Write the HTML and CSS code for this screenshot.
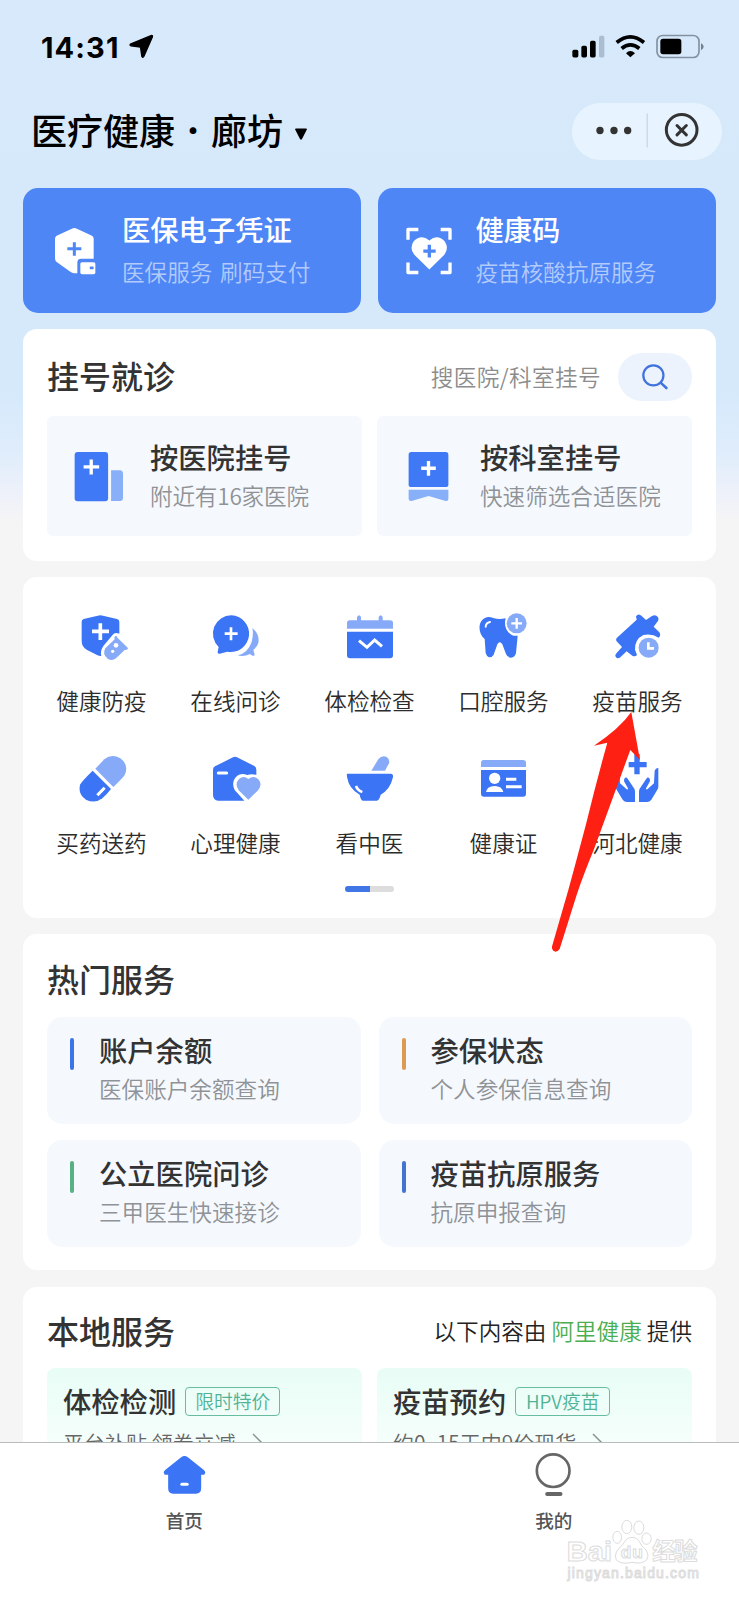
FILE: index.html
```html
<!DOCTYPE html>
<html lang="zh-CN">
<head>
<meta charset="utf-8">
<title>医疗健康</title>
<link rel="stylesheet" href="styles.css">
</head>
<body>
<div class="screen">
  <header class="status">
    <div class="status-left">
      <span class="clock">14:31</span>
      <svg class="locate" viewBox="386 103 76 76"><path d="M453 108Q459 106 457 112L431 171Q427 177 425 171L421 143L392 139Q386 137 392 133Z" fill="#000" stroke="#000" stroke-width="4" stroke-linejoin="round"/></svg>
    </div>
    <svg class="status-icons" viewBox="605 100 402 80">
      <rect x="609" y="150" width="18" height="23" rx="5"/><rect x="636" y="138" width="17" height="35" rx="5"/><rect x="662" y="123" width="17" height="50" rx="5"/><rect x="689" y="108" width="16" height="65" rx="5" fill="#aabdd1"/>
      <path d="M742 128Q783 94 824 128M757 146Q783 124 810 146" fill="none" stroke="#000" stroke-width="11"/>
      <path d="M783 172L770 160Q783 147 797 160Z"/>
      <rect x="863" y="107" width="126" height="66" rx="17" fill="none" stroke="#8392a1" stroke-width="5"/><rect x="873" y="117" width="63" height="46" rx="8"/><path d="M995 130Q1003 134 1003 140T995 151Z" fill="#73818f"/>
    </svg>
  </header>
  <div class="navbar">
    <h1 class="title"><span>医疗健康</span><span class="dot">·</span><span>廊坊</span></h1>
    <svg class="caret" viewBox="0 0 12 12"><path d="M1 0.5H11Q12.5 0.7 11.6 2L7 11Q6 12.4 5 11L.4 2Q-.5 .7 1 .5Z"/></svg>
    <div class="capsule">
      <svg viewBox="607 307 450 170"><g fill="#333"><circle cx="691" cy="392" r="11"/><circle cx="733" cy="392" r="11"/><circle cx="774" cy="392" r="11"/></g><path d="M832.5 341V443" stroke="#c3cedb" stroke-width="3"/><circle cx="936" cy="390" r="46" fill="none" stroke="#333" stroke-width="9"/><path d="M922 377L950 405M950 377L922 405" stroke="#333" stroke-width="9" stroke-linecap="round"/></svg>
    </div>
  </div>

  <main class="content">
    <section class="heroes">
      <div class="hero">
        <svg class="hero-icon" viewBox="150 165 150 155"><path d="M217 175Q223 172 229 175L276 197Q281 200 281 206V266H243Q232 266 232 278V309H222Q216 309 211 305L171 276Q165 272 165 265V206Q165 200 170 197Z" fill="#fff"/><path d="M223 216V257M202 236H244" stroke="#4f86f6" stroke-width="9"/><rect x="241" y="276" width="45" height="36" rx="5" fill="#fff"/><rect x="269" y="289" width="12" height="8" rx="3" fill="#4f86f6"/></svg>
        <div class="hero-text"><b>医保电子凭证</b><span class="spaced">医保服务 刷码支付</span></div>
      </div>
      <div class="hero hero-code">
        <svg class="hero-icon" viewBox="100 165 150 155"><path d="M112 209V178H143M210 178H238V209M238 277V307H210M143 307H112V277" fill="none" stroke="#fff" stroke-width="10" stroke-linejoin="round"/><path d="M176 298L131 254Q115 234 129 213Q152 191 176 211Q200 191 222 213Q236 234 221 254Z" fill="#fff"/><path d="M176 224V262M158 243H195" stroke="#4f86f6" stroke-width="10"/></svg>
        <div class="hero-text"><b>健康码</b><span>疫苗核酸抗原服务</span></div>
      </div>
    </section>

    <section class="card register">
      <div class="card-head">
        <h2>挂号就诊</h2>
        <span class="search-hint">搜医院/科室挂号</span>
        <div class="search"><svg viewBox="812 580 86 84"><circle cx="850" cy="617" r="31" fill="none" stroke="#4074dc" stroke-width="7"/><path d="M873 640L890 656" stroke="#4074dc" stroke-width="8" stroke-linecap="round"/></svg></div>
      </div>
      <div class="pair">
        <div class="way">
          <svg class="way-icon" viewBox="215 150 160 160"><rect x="223" y="156" width="101" height="149" rx="9" fill="#4079f6"/><path d="M273 179V224M250 201H297" stroke="#fff" stroke-width="10"/><path d="M333 211H360Q369 212 369 221V295Q369 304 360 304H333Z" fill="#88b0f8"/></svg>
          <div class="way-text"><b>按医院挂号</b><span class="tight">附近有16家医院</span></div>
        </div>
        <div class="way way-dept">
          <svg class="way-icon" viewBox="97 150 160 160"><rect x="117" y="156" width="120" height="106" rx="8" fill="#4079f6"/><path d="M177 183V228M155 205H199" stroke="#fff" stroke-width="10"/><path d="M117 270H237V297Q237 305 229 304L177 289L126 304Q117 305 117 297Z" fill="#88b0f8"/></svg>
          <div class="way-text"><b>按科室挂号</b><span>快速筛选合适医院</span></div>
        </div>
      </div>
    </section>

    <section class="card services">
      <div class="grid">
        <div class="svc"><svg viewBox="215 125 180 150"><path d="M292 136Q300 134 308 136L350 146Q357 148 357 155V190Q343 184 336 195L309 227Q299 242 303 257Q298 258 290 254L259 238Q244 229 244 211V154Q244 148 250 146Z" fill="#3b74f4"/><path d="M300 159V209M275 183H326" stroke="#fff" stroke-width="11"/><path d="M342 200Q349 193 352 203L380 230Q386 236 379 238L373 239L347 264Q335 273 322 265Q305 252 315 234L343 207Z" fill="#86aaf8"/><circle cx="347" cy="225" r="7" fill="#fff"/><circle cx="337" cy="243" r="5" fill="#fff"/></svg><span>健康防疫</span></div>
        <div class="svc"><svg viewBox="619 125 180 150"><path d="M758 173Q781 193 776 218Q773 230 761 238L765 253Q764 258 758 256L751 251Q733 260 714 255Q744 249 756 215Q762 192 758 173Z" fill="#86aaf8"/><path d="M695 135A55 55 0 1 1 683 244L660 250Q653 252 654 244L657 230A55 55 0 0 1 695 135Z" fill="#3b74f4"/><path d="M694 171V210M675 190H714" stroke="#fff" stroke-width="8"/></svg><span>在线问诊</span></div>
        <div class="svc"><svg viewBox="-90 125 180 150"><path d="M-69 175V158Q-69 150-61 150H-39V140Q-33 130-27 140V150H26V140Q32 130 38 140V150H60Q69 150 69 158V175Z" fill="#86aaf8"/><path d="M-69 184H69V255Q69 264 60 264H-60Q-69 264-69 255Z" fill="#3b74f4"/><path d="M-33 211L-9 231L14 209L36 228" fill="none" stroke="#fff" stroke-width="9"/></svg><span>体检检查</span></div>
        <div class="svc"><svg viewBox="312 125 180 150"><path d="M346 142Q356 137 370 143Q386 149 407 144Q399 176 424 193Q433 198 443 196L438 248Q434 262 423 262Q412 262 408 251L397 222Q389 209 382 222L371 253Q366 262 357 261Q350 259 347 248L344 206Q326 190 329 165Q332 148 346 142Z" fill="#3b74f4"/><path d="M347 169Q348 157 360 155" fill="none" stroke="#fff" stroke-width="6" stroke-linecap="round"/><circle cx="440" cy="159" r="30" fill="#86aaf8"/><path d="M440 143V175M424 159H456" stroke="#fff" stroke-width="7"/></svg><span>口腔服务</span></div>
        <div class="svc"><svg viewBox="714 125 180 150"><path d="M798 138Q806 127 815 137L828 149L846 137Q857 131 864 141Q868 149 861 156L851 169L868 186Q874 196 866 202Q846 189 820 194Q794 207 795 238L801 254Q795 260 787 256L770 243L751 261Q743 267 738 261Q733 255 740 248L756 230L742 215Q735 208 741 202L800 148Z" fill="#3b74f4"/><circle cx="836" cy="232" r="30" fill="#86aaf8"/><path d="M835 216V234H852" fill="none" stroke="#fff" stroke-width="8"/></svg><span>疫苗服务</span></div>
        <div class="svc"><svg viewBox="215 550 180 150"><path d="M285 594L312 566Q334 547 360 563Q387 583 373 613Q370 619 339 649Z" fill="#86aaf8"/><path d="M277 600L332 655Q318 673 306 683Q284 700 257 687Q231 669 240 641Q244 632 277 600Z" fill="#3b74f4"/><path d="M291 674L313 651" stroke="#fff" stroke-width="9"/></svg><span>买药送药</span></div>
        <div class="svc"><svg viewBox="619 550 180 150"><path d="M700 560Q706 557 712 560L764 586Q770 589 770 597V613Q756 608 743 613Q714 602 702 630Q698 645 705 658L734 690H656Q640 688 640 672V597Q640 590 646 587Z" fill="#3b74f4"/><path d="M656 607H681" stroke="#fff" stroke-width="9" stroke-linecap="round"/><path d="M746 687L717 659Q704 640 718 625Q732 613 746 625Q762 612 776 626Q790 642 774 660Z" fill="#86aaf8"/></svg><span>心理健康</span></div>
        <div class="svc"><svg viewBox="-90 550 180 150"><path d="M4 600L26 564Q35 553 49 558Q60 564 57 578L45 600Z" fill="#86aaf8"/><path d="M-69 609H61Q71 610 69 619Q61 656 32 672Q28 690 19 690H-20Q-28 690-31 672Q-63 655-69 619Q-70 611-69 609Z" fill="#3b74f4"/><path d="M-42 646Q-37 660-23 664" fill="none" stroke="#fff" stroke-width="8"/></svg><span>看中医</span></div>
        <div class="svc"><svg viewBox="312 550 180 150"><path d="M333 589V576Q333 568 341 568H459Q468 568 468 576V589Z" fill="#86aaf8"/><path d="M333 598H468V669Q468 678 459 678H342Q333 678 333 669Z" fill="#3b74f4"/><circle cx="374" cy="623" r="17" fill="#fff"/><path d="M348 664Q351 646 374 646Q396 646 400 664Z" fill="#fff"/><path d="M408 626H439M408 648H455" stroke="#fff" stroke-width="9"/></svg><span>健康证</span></div>
        <div class="svc"><svg viewBox="714 550 180 150"><path d="M801 550V611M776 582H830" stroke="#3b74f4" stroke-width="16"/><path id="hand" d="M807 694V662Q808 653 813 648L829 624Q834 617 839 624Q842 630 837 637L829 651Q825 657 832 656L852 638L854 600Q857 591 865 592V648Q865 653 862 657L844 687Q839 694 831 694Z" fill="#3b74f4"/><use href="#hand" transform="translate(1602 0) scale(-1 1)"/></svg><span>河北健康</span></div>
      </div>
      <div class="pager"><i></i></div>
    </section>

    <section class="card hot">
      <h2>热门服务</h2>
      <div class="tiles">
        <div class="tile"><i class="bar blue"></i><div><b>账户余额</b><span>医保账户余额查询</span></div></div>
        <div class="tile"><i class="bar orange"></i><div><b>参保状态</b><span>个人参保信息查询</span></div></div>
        <div class="tile"><i class="bar green"></i><div><b>公立医院问诊</b><span>三甲医生快速接诊</span></div></div>
        <div class="tile"><i class="bar royal"></i><div><b>疫苗抗原服务</b><span>抗原申报查询</span></div></div>
      </div>
    </section>

    <section class="card local">
      <div class="local-head"><h2>本地服务</h2><p>以下内容由<em>阿里健康</em>提供</p></div>
      <div class="pair">
        <div class="offer"><div class="offer-top"><b>体检检测</b><span class="tag">限时特价</span></div><div class="offer-sub"><span>平台补贴 领券立减</span><svg viewBox="0 0 12 20"><path d="M1 1L10 10L1 19" fill="none" stroke="#8a9692" stroke-width="1.5"/></svg></div></div>
        <div class="offer"><div class="offer-top"><b>疫苗预约</b><span class="tag">HPV疫苗</span></div><div class="offer-sub"><span>约0–15天内9价现货</span><svg viewBox="0 0 12 20"><path d="M1 1L10 10L1 19" fill="none" stroke="#8a9692" stroke-width="1.5"/></svg></div></div>
      </div>
    </section>
  </main>

  <nav class="tabbar">
    <div class="tab"><svg viewBox="480 540 146 150"><path d="M543 562Q553 554 563 562L611 600Q619 607 612 614H603V655Q603 671 587 671H519Q504 671 504 655V614H494Q487 607 495 600Z" fill="#3b74f4"/><path d="M545 643H561" stroke="#fff" stroke-width="9" stroke-linecap="round"/></svg><span>首页</span></div>
    <div class="tab"><svg viewBox="479 540 146 150"><circle cx="551" cy="602" r="49" fill="none" stroke="#666" stroke-width="8"/><path d="M533 672H573" stroke="#666" stroke-width="12" stroke-linecap="round"/></svg><span>我的</span></div>
  </nav>

  <svg class="pointer" viewBox="540 420 280 730"><path d="M784 426L810 570L781 540L672 838Q640 915 620 975L569 1137Q563 1146 555 1145Q545 1142 546 1130L595 960Q625 850 650 755Q678 640 712 518L672 527Q750 475 784 426Z" fill="#fe2012"/></svg>

  <svg class="watermark" viewBox="585 745 410 195">
    <g fill="#fff" stroke="#dcdcdc" stroke-width="3">
      <text class="wm-brand" x="590" y="874" textLength="136" lengthAdjust="spacingAndGlyphs">Bai</text>
      <ellipse cx="741" cy="803" rx="13" ry="18"/><ellipse cx="770" cy="772" rx="15" ry="20"/><ellipse cx="806" cy="774" rx="15" ry="20"/><ellipse cx="829" cy="807" rx="14" ry="17"/>
      <path d="M786 803Q804 803 813 826Q842 850 830 870Q816 885 786 878Q752 886 738 870Q729 848 758 825Q768 803 786 803Z"/>
      <text class="wm-du" x="752" y="866" textLength="66">du</text>
      <text class="wm-cn" x="846" y="871" textLength="136">经验</text>
      <text class="wm-url" x="592" y="924" textLength="394">jingyan.baidu.com</text>
    </g>
  </svg>
</div>
</body>
</html>
```

FILE: styles.css
```css
* { box-sizing: border-box; }
body { margin: 0; font-family: "Noto Sans CJK SC", "Noto Sans", sans-serif; color: #333; }
h1, h2, p { margin: 0; }
b { display: block; font-weight: 500; }
svg { display: block; flex: none; }
.screen {
  position: relative; width: 739px; height: 1600px; overflow: hidden;
  display: flex; flex-direction: column;
  background: linear-gradient(#d7e9fb 0, #d5e9fb 390px, #e0edfb 455px, #f0f2f9 500px, #f5f5f5 522px);
}

.status { height: 94px; padding: 33px 34px 0 41px; display: flex; justify-content: space-between; align-items: flex-start; }
.status-left { display: flex; gap: 8px; }
.clock { font: 700 29px/29px Inter, sans-serif; color: #000; width: 80px; letter-spacing: 1.1px; }
.locate { width: 25px; height: 25px; margin-top: 1px; }
.status-icons { width: 134px; height: 27px; }

.navbar { height: 94px; padding: 9px 17px 0 31px; display: flex; align-items: flex-start; }
.title { display: flex; font-size: 36px; line-height: 54px; margin-top: -1px; font-weight: 500; color: #000; }
.dot { width: 36px; text-align: center; font-weight: 300; }
.caret { width: 12px; height: 12px; margin: 25px 0 0 12px; }
.capsule { width: 150px; height: 57px; margin-left: auto; border-radius: 29px; background: #e7f3fe; }
.capsule svg { width: 150px; height: 57px; margin-top: -1px; }

.content { flex: 1; min-height: 0; padding: 0 23px; display: flex; flex-direction: column; gap: 16px; overflow: hidden; }
.heroes { display: flex; gap: 17px; flex: none; }
.hero { flex: none; width: 338px; height: 125px; border-radius: 15px; background: #4f86f6; display: flex; padding: 37px 0 0 27px; color: #fff; }
.hero-icon { width: 50px; height: 52px; }
.hero-text { margin: -16px 0 0 22px; white-space: nowrap; }
.hero-text b { font-size: 28.3px; line-height: 40px; }
.hero-text span { display: block; font-size: 22.6px; line-height: 32px; margin-top: 7px; font-weight: 350; color: #b3cbfb; }
.spaced { word-spacing: 2.5px; }
.hero-code { padding-left: 25.5px; }

.card { flex: none; background: #fff; border-radius: 14px; }
h2 { font-size: 32px; line-height: 46px; font-weight: 500; color: #333; position: relative; top: -2px; }
.register { height: 232px; padding: 24px 24px 0; }
.card-head { display: flex; align-items: center; height: 48px; }
.search-hint { margin: -2px 0 0 auto; font-size: 22.6px; letter-spacing: 0.4px; font-weight: 350; color: #8c8c8c; }
.search { width: 74px; height: 48px; margin-left: 17px; border-radius: 24px; background: #edf3fd; display: flex; align-items: center; justify-content: center; }
.search svg { width: 28px; height: 28px; }
.pair { display: flex; gap: 15px; }
.register .pair { margin-top: 15px; }
.way { flex: 1; height: 120px; border-radius: 6px; background: #f5f9fe; display: flex; padding: 34px 0 0 25px; }
.way-icon { width: 53px; height: 53px; }
.way-text { margin: -13px 0 0 25px; white-space: nowrap; }
.way-text b { font-size: 28.3px; line-height: 40px; }
.way-text span { display: block; font-size: 22.6px; line-height: 32px; margin-top: 3px; font-weight: 350; color: #8f9296; }
.way-text .tight { letter-spacing: -0.2px; }

.services { height: 341px; padding: 35px 11.5px 0; display: flex; flex-direction: column; align-items: center; }
.grid { display: grid; grid-template-columns: repeat(5, 134px); grid-auto-rows: 141.5px; }
.svc { display: flex; flex-direction: column; align-items: center; }
.svc svg { width: 60px; height: 50px; }
.svc span { margin-top: 23px; font-size: 22.6px; line-height: 32px; font-weight: 350; color: #2c2c2c; }
.pager { width: 49px; height: 6px; border-radius: 3px; margin-top: -9px; background: #ddd; overflow: hidden; }
.pager i { display: block; width: 25px; height: 6px; background: #4076e6; }

.hot { height: 336px; padding: 23px 24px 0; }
.tiles { margin-top: 14px; display: grid; grid-template-columns: 1fr 1fr; gap: 16px 18px; }
.tile { height: 107px; border-radius: 15px; background: #f5f9fe; display: flex; align-items: flex-start; padding: 13px 0 0 23px; gap: 25px; }
.bar { width: 4px; height: 32px; margin-top: 8px; border-radius: 2px; }
.blue { background: #3c75e7; }
.orange { background: #dc9b52; }
.green { background: #58b185; }
.royal { background: #4474d2; }
.tile b { font-size: 28.3px; line-height: 40px; }
.tile span { display: block; font-size: 22.6px; line-height: 32px; margin-top: 3px; font-weight: 350; color: #8f9296; }

.local { height: 336px; margin-top: 1px; padding: 22px 24px 0; }
.local-head { display: flex; justify-content: space-between; align-items: center; }
.local-head p { font-size: 22.6px; line-height: 44px; margin-top: -2px; font-weight: 350; color: #222; }
.local-head em { font-style: normal; color: #4bae50; margin: 0 5px; }
.local .pair { margin-top: 13px; }
.offer { flex: 1; height: 160px; padding: 13px 16px; border-radius: 8px 8px 0 0; background: linear-gradient(#e8fdf6 0, #f5fefb 74px); }
.offer-top { display: flex; align-items: center; gap: 9px; }
.offer b { font-size: 28.3px; line-height: 40px; }
.tag { height: 29px; min-width: 95px; text-align: center; padding: 0 8px; border: 1px solid #66bda0; border-radius: 4px; font-size: 18.8px; line-height: 26px; font-weight: 350; color: #50b396; }
.offer-sub { display: flex; align-items: center; gap: 16px; margin-top: 5px; font-size: 21px; line-height: 32px; font-weight: 350; color: #666; }
.offer-sub svg { width: 12px; height: 20px; margin-top: 2px; }

.tabbar { flex: none; height: 158px; border-top: 1px solid #b9bcbb; background: #fff; display: flex; }
.tab { flex: 1; display: flex; flex-direction: column; align-items: center; padding: 7px 1px 0 0; color: #555; }
.tab svg { width: 49px; height: 50px; }
.tab span { margin-top: 7px; font-size: 18.6px; line-height: 26px; font-weight: 500; }

.pointer { position: absolute; left: 550px; top: 710px; width: 93.3px; height: 243.3px; }
.watermark { position: absolute; left: 565px; top: 1518px; width: 137px; height: 65px; }
.wm-brand { font: 700 82px "Liberation Sans", sans-serif; }
.wm-du { font: 700 52px "Liberation Sans", sans-serif; }
.wm-cn { font: 700 70px "Noto Sans CJK SC", sans-serif; }
.wm-url { font: 400 42px "Liberation Sans", sans-serif; }
```
